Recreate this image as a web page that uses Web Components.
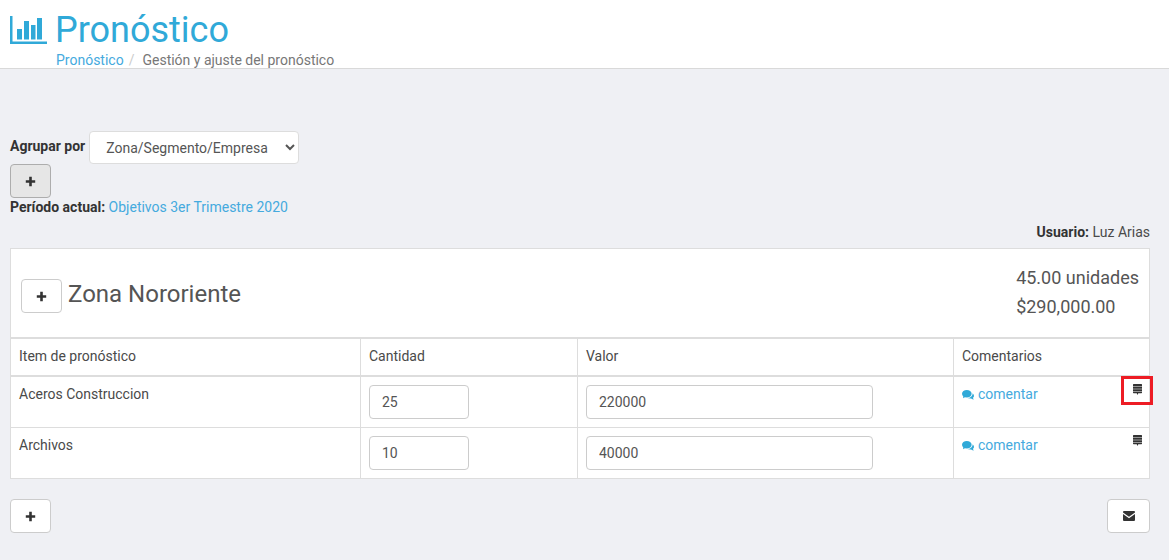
<!DOCTYPE html>
<html lang="es">
<head>
<meta charset="utf-8">
<title>Pronóstico</title>
<style>
  html, body { margin: 0; height: 560px; overflow: hidden; }
  body { background: #eff0f4; font: 14px/20px Roboto, sans-serif; color: #4a4a4a; }
  main { display: block; padding: 62px 19px 0 10px; }
</style>
</head>
<body>
<app-header heading="Pronóstico" crumb="Pronóstico" current="Gestión y ajuste del pronóstico"></app-header>
<main>
  <group-toolbar></group-toolbar>
  <user-line>Luz Arias</user-line>
  <zone-panel name="Zona Nororiente" units="45.00 unidades" amount="$290,000.00">
    <forecast-row item="Aceros Construccion" qty="25" value="220000" flagged></forecast-row>
    <forecast-row item="Archivos" qty="10" value="40000"></forecast-row>
  </zone-panel>
  <page-footer></page-footer>
</main>

<script>
const plusIcon = `<svg width="11" height="11" viewBox="0 0 11 11"><path fill="currentColor" d="M4.200 .8h2.600v3.400h3.400v2.600H6.800v3.400H4.200V6.800H.8V4.200h3.400z"/></svg>`;

class IconButton extends HTMLElement {
  constructor() {
    super();
    this.attachShadow({ mode: 'open' });
    this.shadowRoot.innerHTML = `
      <style>
        :host { display: inline-block; }
        button {
          display: flex; align-items: center; justify-content: center;
          width: 41px; height: 34px; padding: 0; cursor: pointer;
          background: #fff; color: #333;
          border: 1px solid #ccc; border-radius: 4px;
        }
        :host([pressed]) button { background: #e6e6e6; border-color: #adadad; }
        :host([wide]) button { width: 43px; }
      </style>
      <button><slot></slot></button>`;
  }
}
customElements.define('icon-button', IconButton);

class AppHeader extends HTMLElement {
  constructor() {
    super();
    this.attachShadow({ mode: 'open' });
    this.shadowRoot.innerHTML = `
      <style>
        :host { display: block; height: 68px; background: #fff; border-bottom: 1px solid #d9d9d9; overflow: hidden; }
        .wrap { display: grid; grid-template-columns: 46px auto; padding: 0 0 0 10px; }
        svg { margin-top: 16px; }
        h1 { margin: 10px 0 0 -1px; font: 400 36px/40px Roboto, sans-serif; color: #30a9d8; }
        .crumbs { grid-column: 2; display: flex; font-size: 14px; line-height: 20px; color: #777; }
        .crumbs a { color: #45aade; text-decoration: none; }
        .crumbs i { font-style: normal; color: #ccc; padding: 0 8px 0 5px; }
      </style>
      <div class="wrap">
        <svg width="37" height="28" viewBox="0 0 37 28">
          <path fill="#30a9d8" d="M0 0h2.500v25.500H37V28H0zM7 13h5v10.500H7zM14 5h5v18.500h-5zM21 9h4.500v14.500H21zM27 2h5v21.500h-5z"/>
        </svg>
        <h1>${this.getAttribute('heading')}</h1>
        <div class="crumbs"><a href="#">${this.getAttribute('crumb')}</a><i>/</i><span>${this.getAttribute('current')}</span></div>
      </div>`;
  }
}
customElements.define('app-header', AppHeader);

class GroupToolbar extends HTMLElement {
  constructor() {
    super();
    this.attachShadow({ mode: 'open' });
    this.shadowRoot.innerHTML = `
      <style>
        :host { display: block; }
        .by { display: flex; align-items: flex-start; gap: 4px; height: 33px; }
        .by b { margin-top: 5px; }
        b { font-weight: 700; color: #333; }
        select {
          width: 210px; height: 33px; padding: 0 12px; font: 14px Roboto, sans-serif; color: #555;
          background: #fff; border: 1px solid #ddd; border-radius: 4px;
        }
        icon-button { display: block; height: 34px; }
        .period { line-height: 20px; margin-top: -1px; }
        a { color: #45aade; text-decoration: none; }
      </style>
      <div class="by"><b>Agrupar por</b>
        <select><option>Zona/Segmento/Empresa</option></select>
      </div>
      <icon-button pressed>${plusIcon}</icon-button>
      <div class="period"><b>Período actual:</b> <a href="#">Objetivos 3er Trimestre 2020</a></div>`;
  }
}
customElements.define('group-toolbar', GroupToolbar);

class UserLine extends HTMLElement {
  constructor() {
    super();
    this.attachShadow({ mode: 'open' });
    this.shadowRoot.innerHTML = `
      <style>
        :host { display: block; text-align: right; margin-top: 5px; height: 26px; line-height: 20px; }
        b { color: #333; }
      </style>
      <b>Usuario:</b> <slot></slot>`;
  }
}
customElements.define('user-line', UserLine);

class ZonePanel extends HTMLElement {
  constructor() {
    super();
    this.attachShadow({ mode: 'open' });
    this.shadowRoot.innerHTML = `
      <style>
        :host { display: block; background: #fff; border: 1px solid #ddd; border-bottom: 0; }
        .head { display: flex; align-items: center; height: 88px; padding: 0 10px; box-sizing: border-box; }
        .head icon-button { margin-top: 6px; }
        h3 { flex: 1; margin: 2px 0 0 6px; font: 400 24px/28px Roboto, sans-serif; color: #555; }
        .totals { font-size: 18px; line-height: 29px; color: #555; margin-top: -3px; }
        .cols, ::slotted(forecast-row) { display: grid; grid-template-columns: 349px 217px 376px 1fr; }
        .cols { height: 36px; border-top: 2px solid #ddd; border-bottom: 2px solid #ddd; line-height: 35px; }
        .cols div { padding-left: 8px; border-left: 1px solid #ddd; }
        .cols div:first-child { border-left: 0; }
      </style>
      <div class="head">
        <icon-button>${plusIcon}</icon-button>
        <h3>${this.getAttribute('name')}</h3>
        <div class="totals">${this.getAttribute('units')}<br>${this.getAttribute('amount')}</div>
      </div>
      <div class="cols"><div>Item de pronóstico</div><div>Cantidad</div><div>Valor</div><div>Comentarios</div></div>
      <slot></slot>`;
  }
}
customElements.define('zone-panel', ZonePanel);

class ForecastRow extends HTMLElement {
  constructor() {
    super();
    this.attachShadow({ mode: 'open' });
    this.shadowRoot.innerHTML = `
      <style>
        :host { height: 50px; border-bottom: 1px solid #ddd; }
        .cell { padding: 7px 8px 0; border-left: 1px solid #ddd; position: relative; }
        .cell.first { border-left: 0; }
        input {
          display: block; box-sizing: border-box; height: 34px; padding: 0 12px; margin-top: 1px;
          font: 14px Roboto, sans-serif; color: #555; background: #fff;
          border: 1px solid #ccc; border-radius: 4px;
        }
        .qty { width: 100px; }
        .val { width: 287px; }
        a { color: #45aade; text-decoration: none; display: inline-flex; align-items: center; gap: 4px; }
        a svg { margin-top: 2px; }
        .note { position: absolute; top: 7px; right: 7px; width: 9px; height: 11px; }
        .mark { position: absolute; top: -1px; right: -4px; width: 26px; height: 23px; border: 3px solid #ed1c24; }
      </style>
      <div class="cell first">${this.getAttribute('item')}</div>
      <div class="cell"><input class="qty" value="${this.getAttribute('qty')}"></div>
      <div class="cell"><input class="val" value="${this.getAttribute('value')}"></div>
      <div class="cell">
        <a href="#"><svg width="12" height="10" viewBox="0 0 12 10"><ellipse cx="4.800" cy="3.800" rx="4.800" ry="3.800" fill="#30a9d8"/><path fill="#30a9d8" d="M1.500 5.500 1 8.200l3.200-1.600zM10.600 3.200C12.400 4.800 12.400 7 11 7.800l.6 2-2.600-1.400C7.600 8.600 6.400 8.300 5.400 8c3 0 5.400-2 5.200-4.800z"/></svg>comentar</a>
        <svg class="note" viewBox="0 0 9 11"><path fill="#333" d="M.5 0h8l.5.5v1.900H0V.5zM0 2.900h9v1.900H0zM0 5.300h9v1.900H0zM0 7.700h9v1l-.5.5H5.300L4.500 11l-.8-1.800H.5L0 8.700z"/></svg>
        ${this.hasAttribute('flagged') ? '<div class="mark"></div>' : ''}
      </div>`;
  }
}
customElements.define('forecast-row', ForecastRow);

class PageFooter extends HTMLElement {
  constructor() {
    super();
    this.attachShadow({ mode: 'open' });
    this.shadowRoot.innerHTML = `
      <style>
        :host { display: flex; justify-content: space-between; margin-top: 20px; }
      </style>
      <icon-button>${plusIcon}</icon-button>
      <icon-button wide><svg width="12" height="10" viewBox="0 0 12 10"><path fill="#333" d="M0 1.500V1a1 1 0 0 1 1-1h10a1 1 0 0 1 1 1v.5L6 5.800zM0 3l6 4.300L12 3v6a1 1 0 0 1-1 1H1a1 1 0 0 1-1-1z"/></svg></icon-button>`;
  }
}
customElements.define('page-footer', PageFooter);
</script>
</body>
</html>
